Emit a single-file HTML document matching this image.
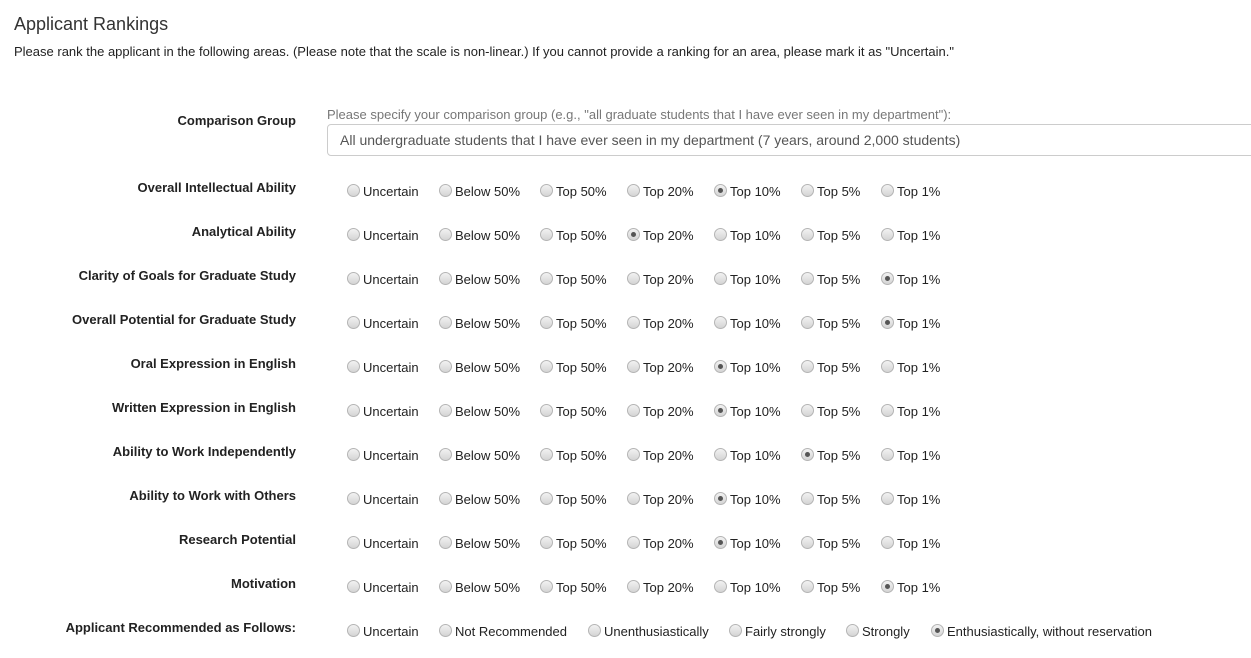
<!DOCTYPE html>
<html><head><style>
body{margin:0;width:1251px;height:658px;overflow:hidden;background:#fff;font-family:"Liberation Sans",Arial,sans-serif;color:#333;position:relative}
.a{position:absolute;white-space:nowrap}
h1{position:absolute;left:14px;top:14px;margin:0;font-size:18px;font-weight:normal;color:#333}
.lbl{position:absolute;right:955px;font-weight:bold;font-size:13px;color:#222}
.r{position:absolute;width:11px;height:11px;border-radius:50%;border:1px solid #b5b5b5;background:linear-gradient(#f2f2f2,#d4d4d4);box-sizing:content-box}
.r.on::after{content:"";position:absolute;left:3px;top:3px;width:5px;height:5px;border-radius:50%;background:#555}
.t{position:absolute;font-size:13px;color:#222}
</style></head><body>
<h1>Applicant Rankings</h1>
<div class="a" style="left:14px;top:44px;font-size:13px;color:#222">Please rank the applicant in the following areas. (Please note that the scale is non-linear.) If you cannot provide a ranking for an area, please mark it as "Uncertain."</div>
<div class="lbl" style="top:113px">Comparison Group</div>
<div class="a" style="left:327px;top:107px;font-size:13px;color:#777">Please specify your comparison group (e.g., "all graduate students that I have ever seen in my department"):</div>
<div class="a" style="left:327px;top:124px;width:940px;height:32px;border:1px solid #ccc;border-radius:4px;box-sizing:border-box"></div>
<div class="a" style="left:340px;top:132px;font-size:14px;color:#555">All undergraduate students that I have ever seen in my department (7 years, around 2,000 students)</div>
<div id="rows"></div>
<script>
var rows=[["Overall Intellectual Ability",4],["Analytical Ability",3],["Clarity of Goals for Graduate Study",6],["Overall Potential for Graduate Study",6],["Oral Expression in English",4],["Written Expression in English",4],["Ability to Work Independently",5],["Ability to Work with Others",4],["Research Potential",4],["Motivation",6]];
var opts=["Uncertain","Below 50%","Top 50%","Top 20%","Top 10%","Top 5%","Top 1%"];
var xs=[347,439,540,627,714,801,881];
var h="";
function row(y,label,o,x,sel){
 h+='<div class="lbl" style="top:'+(y-10)+'px">'+label+'</div>';
 for(var i=0;i<o.length;i++){
  h+='<div class="r'+(i==sel?' on':'')+'" style="left:'+x[i]+'px;top:'+(y-6)+'px"></div>';
  h+='<div class="t" style="left:'+(x[i]+16)+'px;top:'+(y-6)+'px">'+o[i]+'</div>';
 }
}
for(var k=0;k<rows.length;k++)row(190+44*k,rows[k][0],opts,xs,rows[k][1]);
row(630,"Applicant Recommended as Follows:",["Uncertain","Not Recommended","Unenthusiastically","Fairly strongly","Strongly","Enthusiastically, without reservation"],[347,439,588,729,846,931],5);
document.getElementById("rows").innerHTML=h;
</script>
</body></html>
